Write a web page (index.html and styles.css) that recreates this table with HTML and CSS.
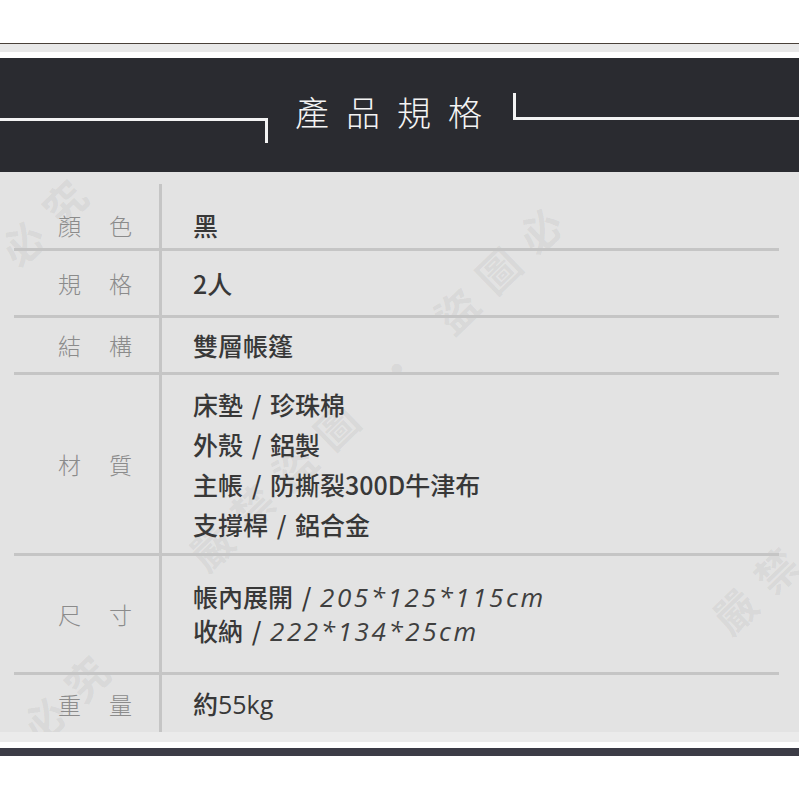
FILE: index.html
```html
<!DOCTYPE html>
<html lang="zh-Hant">
<head>
  <meta charset="UTF-8">
  <title>產品規格</title>
  <meta name="viewport" content="width=device-width, initial-scale=1.0">
  <link rel="stylesheet" href="styles.css">
</head>

<body>
  <div class="page">
    <div class="top-space"></div>
    <div class="top-rule"></div>

    <div class="banner">
      <div class="bracket bracket-left"></div>
      <h1 class="title">產品規格</h1>
      <div class="bracket bracket-right"></div>
    </div>

    <div class="specs">
      <!-- faint watermarks over the table -->
      <span class="watermark wm-main">嚴禁盜圖 • 盜圖必</span>
      <span class="watermark wm-right">嚴禁</span>
      <span class="watermark wm-bottom">必究</span>
      <span class="watermark wm-top">必究</span>

      <div class="spec-table">
        <div class="row row-color">
          <div class="label">顏色</div>
          <div class="value">黑</div>
        </div>
        <div class="row row-size">
          <div class="label">規格</div>
          <div class="value">2人</div>
        </div>
        <div class="row row-build">
          <div class="label">結構</div>
          <div class="value">雙層帳篷</div>
        </div>
        <div class="row row-material">
          <div class="label">材質</div>
          <div class="value">
            <div>床墊 / 珍珠棉</div>
            <div>外殼 / 鋁製</div>
            <div>主帳 / 防撕裂300D牛津布</div>
            <div>支撐桿 / 鋁合金</div>
          </div>
        </div>
        <div class="row row-dims">
          <div class="label">尺寸</div>
          <div class="value">
            <div>帳內展開 / <span class="num">205*125*115cm</span></div>
            <div>收納 / <span class="num">222*134*25cm</span></div>
          </div>
        </div>
        <div class="row row-weight">
          <div class="label">重量</div>
          <div class="value weight">約55kg</div>
        </div>
      </div>
    </div>

    <div class="bottom-strip"></div>
    <div class="bottom-bar"></div>
  </div>
</body>
</html>
```

FILE: styles.css
```css
html, body {
  margin: 0;
  padding: 0;
  background-color: #ffffff;
  font-family: "Noto Sans CJK TC", "Noto Sans", sans-serif;
}

.page {
  width: 799px;
  overflow: hidden;
}

.top-space {
  height: 43px;
}

.top-rule {
  height: 14px;
  border-top: 1px solid #4a4139;
  background: linear-gradient(#e8e8e8 0, #e8e8e8 8px, #ffffff 8px);
}

/* dark title band */
.banner {
  height: 114px;
  background-color: #2a2b30;
  display: grid;
  grid-template-columns: 268px 1fr 286px;
  align-items: start;
}

.bracket {
  box-sizing: border-box;
  border-color: #f3f3f3;
  border-style: solid;
  border-width: 0;
}

.bracket-left {
  margin-top: 60px;
  height: 25px;
  border-top-width: 3px;
  border-right-width: 3px;
}

.bracket-right {
  margin-top: 35px;
  height: 27px;
  border-left-width: 3px;
  border-bottom-width: 3px;
}

.title {
  margin: 36px 0 0;
  padding-left: 27px;
  font-size: 34px;
  line-height: 36px;
  font-weight: 300;
  letter-spacing: 17px;
  color: #f4f4f4;
  white-space: nowrap;
}

/* spec table */
.specs {
  position: relative;
  box-sizing: border-box;
  height: 560px;
  padding-top: 12px;
  background-color: #e3e3e3;
  overflow: hidden;
}

.spec-table {
  position: relative;
  margin: 0 20px 0 14px;
}

.row {
  display: grid;
  grid-template-columns: 148px 1fr;
  border-bottom: 3px solid #c5c5c5;
}

.label {
  box-sizing: border-box;
  display: flex;
  align-items: center;
  padding-left: 44px;
  border-right: 3px solid #c5c5c5;
  font-size: 23px;
  font-weight: 300;
  letter-spacing: 28px;
  color: #8b8b8b;
  white-space: nowrap;
}

.value {
  display: flex;
  flex-direction: column;
  justify-content: center;
  padding-left: 31px;
  font-size: 25px;
  font-weight: 500;
  line-height: 40px;
  word-spacing: 3px;
  color: #383838;
  white-space: nowrap;
}

.row-color { height: 64px; }
.row-color .label,
.row-color .value { padding-top: 18px; }
.row-size { height: 64px; }
.row-build { height: 54px; }
.row-material { height: 178px; }
.row-dims { height: 116px; }
.row-dims .value { line-height: 33px; }

.row-weight {
  height: 57px;
  border-bottom: none;
}

.num {
  font-family: "Open Sans", sans-serif;
  font-style: italic;
  font-weight: 500;
  font-size: 26px;
  letter-spacing: 2.6px;
  color: #3f3f3f;
}

.weight {
  font-family: "Open Sans", "Noto Sans CJK TC", sans-serif;
  font-size: 25px;
}

.watermark {
  position: absolute;
  transform: translate(-50%, -50%) rotate(-44deg);
  font-family: "Noto Sans CJK TC", serif;
  font-size: 42px;
  font-weight: 700;
  letter-spacing: 16px;
  color: rgba(70, 70, 70, 0.07);
  white-space: nowrap;
  pointer-events: none;
}

.wm-main { left: 380px; top: 210px; }
.wm-right { left: 760px; top: 412px; }
.wm-bottom { left: 70px; top: 520px; }
.wm-top { left: 48px; top: 44px; }

.bottom-strip {
  height: 16px;
  background: linear-gradient(#ebebeb 0, #ebebeb 10px, #ffffff 10px);
}

.bottom-bar {
  height: 8px;
  background-color: #3c3c46;
}
```
